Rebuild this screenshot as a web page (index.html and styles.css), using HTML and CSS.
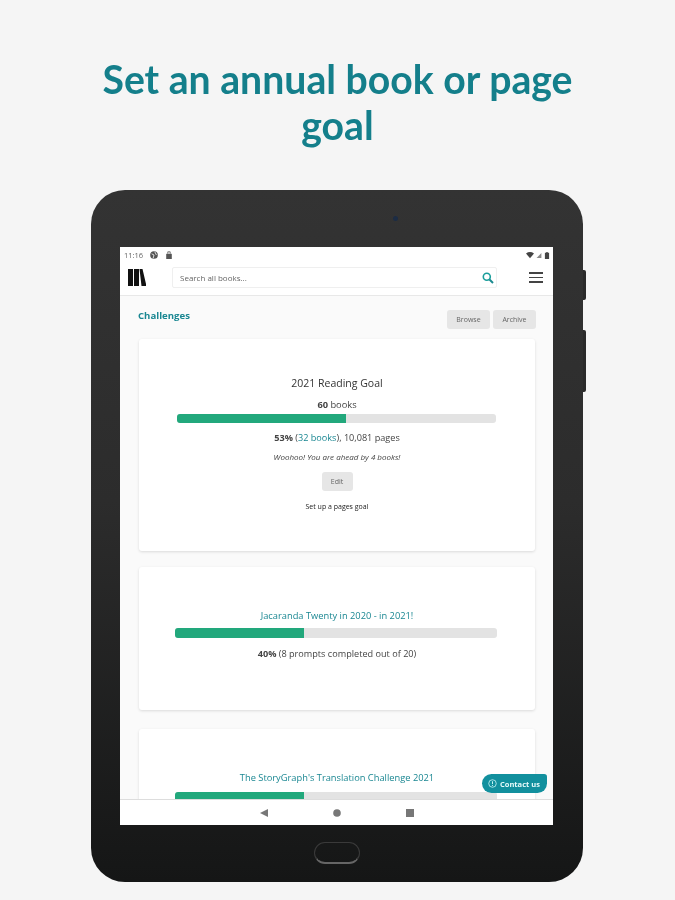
FILE: index.html
```html
<!DOCTYPE html>
<html lang="en">
<head>
<meta charset="utf-8">
<title>Set an annual book or page goal</title>
<link rel="stylesheet" href="styles.css">
</head>
<body>
<h1 class="headline">Set an annual book or page goal</h1>
<div class="tablet">
  <span class="camera"></span>
  <span class="side-btn side-btn-a"></span>
  <span class="side-btn side-btn-b"></span>
  <div class="screen">
    <div class="status">
      <span class="status-left">
        <span class="time">11:16</span>
        <svg class="st-icon" viewBox="0 0 10 10"><circle cx="5" cy="5" r="4.800" fill="#555"/><path d="M2 3.500 5 5 4 9M6 1l2 4" stroke="#fff" fill="none"/></svg>
        <svg class="st-icon" viewBox="0 0 10 10"><path d="M1.500 3.500h7V10h-7z" fill="#555"/><path d="M3.500 3.500V1h3v2.500" stroke="#555" fill="none"/></svg>
      </span>
      <span class="status-right">
        <svg class="st-icon" viewBox="0 0 10 10"><path d="M0 3q5-3.500 10 0L5 9z" fill="#444"/></svg>
        <svg class="st-icon st-small" viewBox="0 0 10 10"><path d="M9 1v8H1z" fill="#888"/></svg>
        <svg class="st-icon st-small" viewBox="0 0 6 10"><path d="M2 0h2v1h2v9H0V1h2z" fill="#444"/></svg>
      </span>
    </div>
    <header class="appbar">
      <svg class="logo" viewBox="0 0 18 17"><path d="M0 0h5v17H0zM6 0h5v17H6zM11.500 0h3L18.500 17h-5z" fill="#111"/></svg>
      <div class="search">
        <span class="search-text">Search all books...</span>
        <svg class="search-icon" viewBox="0 0 12 12"><circle cx="4.800" cy="4.800" r="3.500" fill="none" stroke="#1a9e9b" stroke-width="1.600"/><path d="M7.500 7.500 11 11" stroke="#1a8a8f" stroke-width="2"/></svg>
      </div>
      <span class="burger"><i></i><i></i><i></i></span>
    </header>
    <main class="content">
      <div class="page-head">
        <h2 class="page-title">Challenges</h2>
        <div class="page-actions">
          <span class="btn btn-top">Browse</span>
          <span class="btn btn-top">Archive</span>
        </div>
      </div>
      <section class="card card-goal">
        <h3 class="goal-title">2021 Reading Goal</h3>
        <p class="goal-count"><b>60</b> books</p>
        <div class="bar bar-goal"><div class="fill" style="width:53%"></div></div>
        <p class="goal-stats"><b>53%</b> (<span class="teal">32 books</span>), 10,081 pages</p>
        <p class="goal-note">Woohoo! You are ahead by 4 books!</p>
        <span class="btn btn-edit">Edit</span>
        <p class="goal-link">Set up a pages goal</p>
      </section>
      <section class="card card-prompt">
        <h3 class="prompt-title">Jacaranda Twenty in 2020 - in 2021!</h3>
        <div class="bar"><div class="fill" style="width:40%"></div></div>
        <p class="prompt-stats"><b>40%</b> (8 prompts completed out of 20)</p>
      </section>
      <section class="card card-last">
        <h3 class="prompt-title">The StoryGraph's Translation Challenge 2021</h3>
        <div class="bar"><div class="fill" style="width:40%"></div></div>
      </section>
    </main>
    <span class="contact">
      <svg class="contact-icon" viewBox="0 0 10 10"><circle cx="5" cy="5" r="4.200" fill="none" stroke="#dff" stroke-width=".8"/><path d="M5 2.500v3.200M5 6.800v1" stroke="#dff"/></svg>
      Contact us
    </span>
    <nav class="navbar">
      <svg class="nav-icon" viewBox="0 0 10 10"><path d="M9 1v8L1 5z" fill="#777"/></svg>
      <svg class="nav-icon" viewBox="0 0 10 10"><circle cx="5" cy="5" r="3.800" fill="#777"/></svg>
      <svg class="nav-icon" viewBox="0 0 10 10"><path d="M1 1h8v8H1z" fill="#777"/></svg>
    </nav>
  </div>
  <div class="home-key"></div>
</div>
</body>
</html>
```
FILE: styles.css
```css
* { box-sizing: border-box; }
html, body { margin: 0; height: 900px; overflow: hidden; }
body {
  background: #f5f5f5;
  font-family: "Open Sans", sans-serif;
  color: #333;
  display: flex;
  flex-direction: column;
  align-items: center;
  padding-top: 56px;
}
h1, h2, h3, p { margin: 0; font-weight: normal; }
.headline {
  width: 520px;
  font-family: Lato, sans-serif;
  font-weight: 700;
  font-size: 39.200px;
  line-height: 46px;
  text-align: center;
  color: #147f8b;
  filter: blur(0.4px);
}
.tablet {
  position: relative;
  width: 492px;
  height: 692px;
  margin-top: 42px;
  margin-right: 1px;
  padding: 57px 30px 0 29px;
  border-radius: 34px;
  background: linear-gradient(#333 0%, #2c2c2c 45%, #151616 100%);
}
.camera {
  position: absolute;
  left: 302px;
  top: 26px;
  width: 5px;
  height: 5px;
  border-radius: 50%;
  background: #1c2c44;
}
.side-btn {
  position: absolute;
  right: -3px;
  width: 3px;
  background: #2a2a2a;
  border-radius: 0 2px 2px 0;
}
.side-btn-a { top: 80px; height: 30px; }
.side-btn-b { top: 140px; height: 62px; }
.screen {
  position: relative;
  width: 433px;
  height: 578px;
  background: #fafafa;
  display: flex;
  flex-direction: column;
  overflow: hidden;
  filter: blur(0.55px);
}
.status {
  height: 16px;
  flex: none;
  background: #fff;
  display: flex;
  align-items: center;
  justify-content: space-between;
  padding: 0 3px 0 4px;
}
.status-left, .status-right { display: flex; align-items: center; gap: 7px; }
.status-right { gap: 2px; }
.time { font-size: 7.500px; color: #666; }
.st-icon { width: 8px; height: 8px; display: block; }
.st-small { width: 6px; height: 7px; }
.appbar {
  height: 33px;
  flex: none;
  background: #fff;
  border-bottom: 1px solid #e8e8e8;
  display: flex;
  align-items: center;
  padding: 0 10px 3px 8px;
}
.logo { width: 18px; height: 17px; flex: none; }
.search {
  width: 325px;
  height: 21px;
  margin-left: 26px;
  flex: none;
  background: #fff;
  border: 1px solid #efefef;
  border-radius: 2px;
  display: flex;
  align-items: center;
  justify-content: space-between;
  padding: 0 2px 0 7px;
}
.search-text { font-size: 8px; color: #666; }
.search-icon { width: 12px; height: 12px; }
.burger {
  margin-left: auto;
  width: 14px;
  display: flex;
  flex-direction: column;
  gap: 3px;
}
.burger i { display: block; height: 1.500px; background: #444; }
.content {
  flex: 1;
  min-height: 0;
  overflow: hidden;
  padding: 14px 17px 0 18px;
  display: flex;
  flex-direction: column;
}
.page-head {
  display: flex;
  justify-content: space-between;
  align-items: flex-start;
  flex: none;
}
.page-title {
  font-size: 9.600px;
  line-height: 11px;
  font-weight: 700;
  color: #1a8792;
}
.page-actions { display: flex; gap: 3px; }
.btn {
  display: inline-flex;
  align-items: center;
  justify-content: center;
  background: #e6e6e6;
  border-radius: 3px;
  color: #666;
  font-size: 7px;
}
.btn-top { width: 43px; height: 19px; }
.card {
  flex: none;
  margin-left: 1px;
  width: 396px;
  background: #fff;
  border-radius: 3px;
  box-shadow: 0 1px 3px rgba(0,0,0,.13);
  display: flex;
  flex-direction: column;
  align-items: center;
}
.card-goal { height: 212px; margin-top: 10px; padding-top: 37px; }
.card-prompt { height: 143px; margin-top: 16px; padding-top: 42px; }
.card-last { height: 130px; margin-top: 19px; padding-top: 42px; }
.goal-title { font-size: 10.500px; line-height: 14px; color: #333; }
.goal-count { font-size: 9.300px; line-height: 12px; margin-top: 9px; color: #444; }
.bar {
  width: 322px;
  height: 10px;
  margin-right: 2px;
  background: #e3e3e3;
  border-radius: 3px;
  overflow: hidden;
  flex: none;
}
.bar-goal { width: 319px; height: 9px; margin-top: 3px; }
.fill { height: 100%; background: #22a87c; }
.goal-stats { font-size: 9.150px; line-height: 12px; margin-top: 9px; color: #444; }
.teal { color: #1a8792; }
.goal-note { font-size: 8px; line-height: 10px; margin-top: 8px; font-style: italic; color: #444; }
.btn-edit { width: 31px; height: 19px; margin-top: 10px; }
.goal-link { font-size: 7px; line-height: 10px; margin-top: 11px; color: #222; }
.prompt-title { font-size: 9.300px; line-height: 13px; color: #1a8792; }
.card .bar:not(.bar-goal) { margin-top: 6px; }
.card-last .bar:not(.bar-goal) { margin-top: 8px; }
.prompt-stats { font-size: 9.150px; line-height: 12px; margin-top: 10px; color: #444; }
.contact {
  position: absolute;
  left: 362px;
  top: 527px;
  width: 65px;
  height: 19px;
  background: #12909e;
  border-radius: 10px 3px 10px 10px;
  color: #e8fbfb;
  font-size: 7.500px;
  font-weight: 700;
  display: flex;
  align-items: center;
  gap: 3px;
  padding-left: 6px;
}
.contact-icon { width: 9px; height: 9px; }
.navbar {
  height: 26px;
  flex: none;
  background: #fff;
  border-top: 1px solid #ddd;
  display: flex;
  align-items: center;
  justify-content: center;
  gap: 63px;
  position: relative;
}
.nav-icon { width: 10px; height: 10px; }
.home-key {
  width: 46px;
  height: 22px;
  margin: 17px auto 0;
  position: relative;
  border: 1px solid #3a3a3a;
  border-bottom: 2px solid #666;
  border-radius: 11px / 11px;
}
```
